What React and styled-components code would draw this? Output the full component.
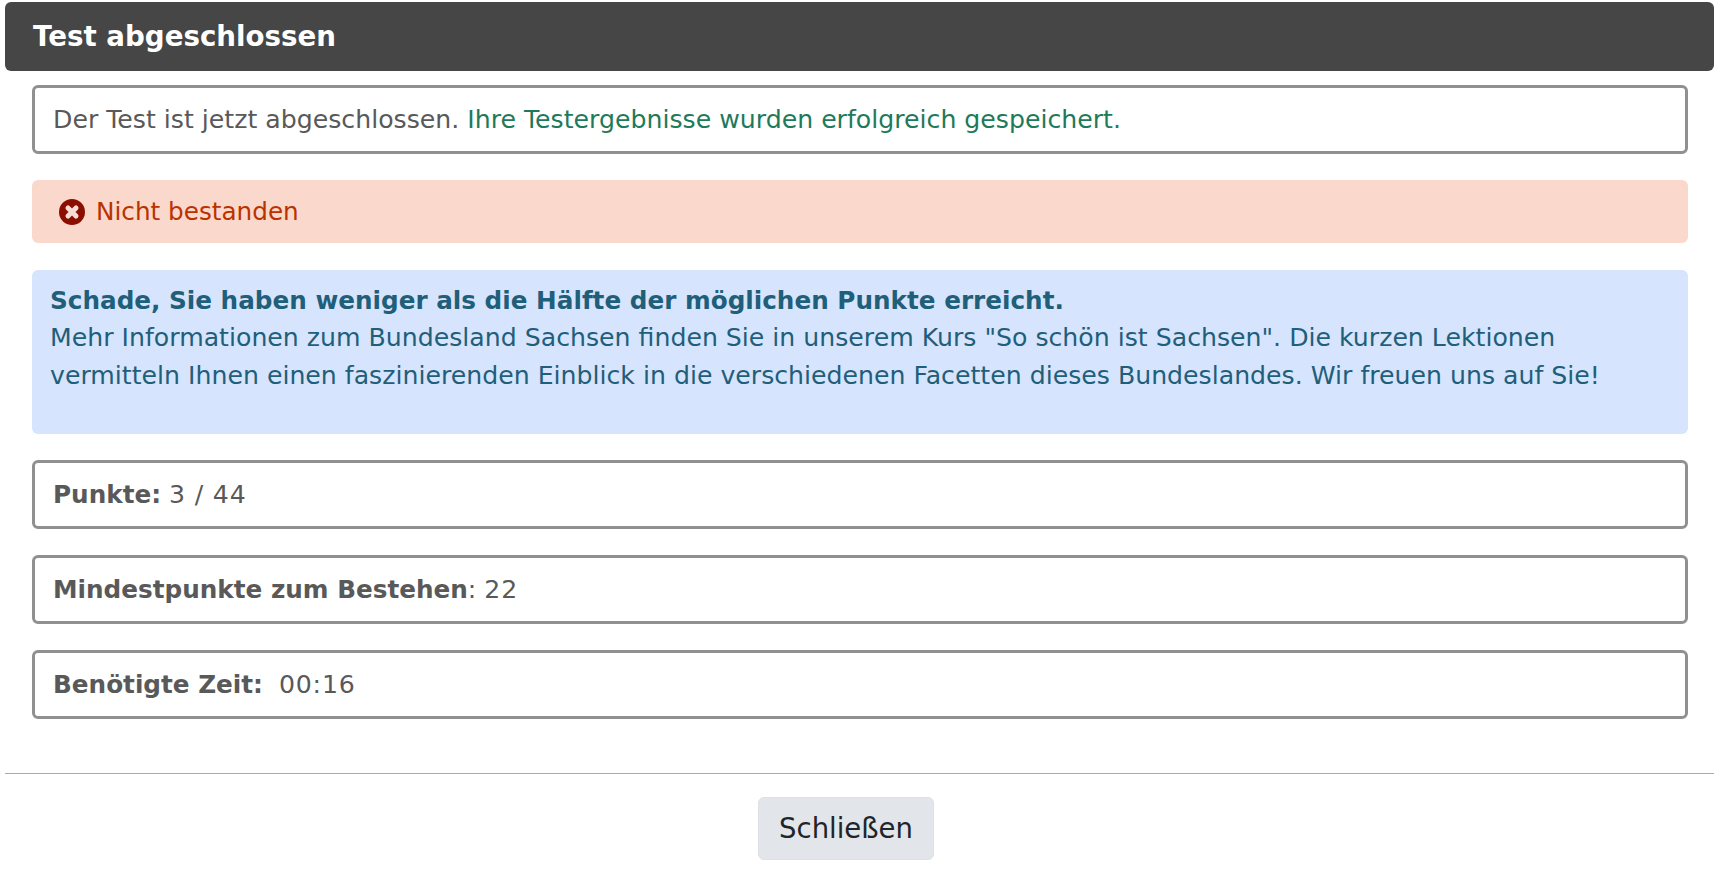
import React from 'react'
import styled, { createGlobalStyle } from 'styled-components'

const GlobalStyle = createGlobalStyle`
   html, body {
      margin: 0;
      padding: 0;
      background: #fff;
   }
   body {
      font-family: 'DejaVu Sans', Verdana, sans-serif;
      font-size: 25.2px;
      color: #595959;
   }
   strong {
      font-size: 24.7px;
   }
`

function FailIcon() {
   return (
      <Icon viewBox="0 0 26 26" aria-hidden="true">
         <circle cx="13" cy="13" r="13" fill="#8b0f00" />
         <path
            d="M9 9 L17 17 M17 9 L9 17"
            stroke="#f6dcd4"
            strokeWidth="5"
            strokeLinecap="round"
         />
      </Icon>
   )
}

function App() {
   return (
      <Page>
         <GlobalStyle />
         <Header>Test abgeschlossen</Header>
         <Content>
            <Box>
               <span>
                  Der Test ist jetzt abgeschlossen.{' '}
                  <Success>Ihre Testergebnisse wurden erfolgreich gespeichert.</Success>
               </span>
            </Box>
            <Failure>
               <FailIcon />
               Nicht bestanden
            </Failure>
            <Info>
               <strong>Schade, Sie haben weniger als die Hälfte der möglichen Punkte erreicht.</strong>
               <br />
               Mehr Informationen zum Bundesland Sachsen finden Sie in unserem Kurs "So schön ist
               Sachsen". Die kurzen Lektionen vermitteln Ihnen einen faszinierenden Einblick in die
               verschiedenen Facetten dieses Bundeslandes. Wir freuen uns auf Sie!
            </Info>
            <Box>
               <span>
                  <strong>Punkte:</strong> <Value>3 / 44</Value>
               </span>
            </Box>
            <Box>
               <span>
                  <strong>Mindestpunkte zum Bestehen</strong>: <Value>22</Value>
               </span>
            </Box>
            <Box>
               <span>
                  <strong>Benötigte Zeit:</strong>&nbsp; <Value>00:16</Value>
               </span>
            </Box>
         </Content>
         <Footer>
            <CloseButton type="button">Schließen</CloseButton>
         </Footer>
      </Page>
   )
}

export default App

const Page = styled.div`
   padding-top: 2px;
   width: 1714px;
   height: 877px;
   box-sizing: border-box;
   overflow: hidden;
`
const Header = styled.div`
   margin-left: 5px;
   height: 69px;
   padding-left: 28px;
   display: flex;
   align-items: center;
   background: #464646;
   border-radius: 6px;
   color: #fff;
   font-size: 27.7px;
   font-weight: 700;
`
const Content = styled.div`
   margin-top: 14px;
   padding: 0 26px 0 32px;
   display: flex;
   flex-direction: column;
   gap: 26.3px;
`
const Box = styled.div`
   height: 68.7px;
   box-sizing: border-box;
   padding: 0 18px;
   display: flex;
   align-items: center;
   border: 3px solid #909090;
   border-radius: 6px;
   background: #fff;
`
const Value = styled.span`
   letter-spacing: 0.8px;
`
const Success = styled.span`
   color: #1e7a5a;
`
const Failure = styled.div`
   height: 63.5px;
   box-sizing: border-box;
   padding-left: 27px;
   display: flex;
   align-items: center;
   gap: 11px;
   background: #fbd8cc;
   border-radius: 6px;
   color: #b93300;
   font-size: 24.7px;
`
const Icon = styled.svg`
   width: 26px;
   height: 26px;
`
const Info = styled.div`
   height: 164px;
   box-sizing: border-box;
   padding: 12.4px 18px;
   line-height: 37.2px;
   background: #d7e4fe;
   border-radius: 6px;
   color: #1f5f7a;
`
const Footer = styled.div`
   margin-top: 54px;
   margin-left: 5px;
   padding: 23px 27px 0 0;
   display: flex;
   justify-content: center;
   border-top: 1px solid #aaa;
`
const CloseButton = styled.button`
   width: 176px;
   height: 63px;
   background: #e2e6ea;
   border: 1px solid #dde1e6;
   border-radius: 6px;
   color: #212529;
   font-family: inherit;
   font-size: 27.5px;
`
